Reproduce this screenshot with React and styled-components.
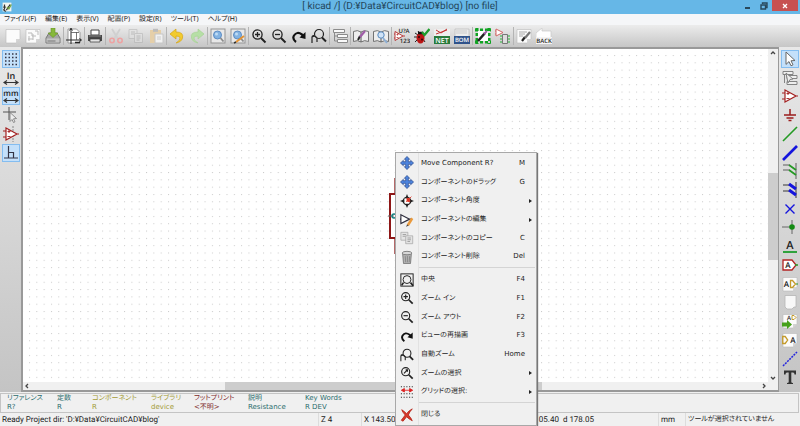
import React from "react";
import styled, { createGlobalStyle } from "styled-components";

/* ---------- icons, all drawn on a 16 x 16 grid ---------- */

const Paper = ({ fold = true }) => (
  <>
    <path d="M1 1.5h14v9.5l-4 4H1z" fill="#fbfbfb" stroke="#b9b9b9" strokeWidth=".6" />
    {fold && <path d="M15 11h-4v4z" fill="#d4d4d4" />}
  </>
);

const Lens = ({ children }) => (
  <g fill="none" stroke="#222" strokeWidth="1.3">
    <circle cx="6.5" cy="6.5" r="4.6" />
    <path d="M10 10l4.5 4.5" strokeWidth="2" />
    {children}
  </g>
);

const Blue = () => (
  <>
    <rect x="1" y="1" width="14" height="14" fill="#e8e8e8" stroke="#959595" />
    <circle cx="7.5" cy="7" r="4" fill="#83b3e2" stroke="#5e8dc4" />
    <circle cx="6.5" cy="6" r="1.5" fill="#bfdcf5" />
    <path d="M10.500 10l3 3.500" stroke="#8b8b8b" strokeWidth="1.800" />
  </>
);

const Move = () => (
  <path
    d="M8 .5l3 3.300H9.500v2.700h2.700V5l3.300 3-3.300 3V9.500H9.500v2.700H11l-3 3.300-3-3.300h1.500V9.500H3.800V11L.5 8l3.300-3v1.500h2.700V3.800H5z"
    fill="#4d83dc"
    stroke="#24468c"
    strokeWidth=".8"
  />
);

const Book = () => (
  <>
    <path d="M.5 3.500q4-2 7.500.5 3.500-2.500 7.500-.5v10q-4-2-7.500.5-3.500-2.500-7.500-.5z" fill="#eee" stroke="#666" strokeWidth=".9" />
    <path d="M8 4v10" stroke="#555" />
  </>
);

const Pages = () => (
  <g fill="#e4e4e4" stroke="#a4a4a4" strokeWidth=".8">
    <path d="M1 1.500h8v9H1z" />
    <path d="M6.500 5.500h8v9h-8z" />
    <path d="M3 4h4M3 6h3M8.500 8h4M8.500 10h4M8.500 12h3" stroke="#8a8a8a" />
  </g>
);

const Letters = ({ x, y, size, color, children }) => (
  <text x={x} y={y} fontSize={size} fill={color} fontWeight="600" fontFamily="Open Sans, sans-serif" textAnchor="middle">
    {children}
  </text>
);

const Amp = () => (
  <g fill="#fff" stroke="#a32020" strokeWidth="1.200">
    <path d="M3 2l11 6-11 6zM0 5h3M0 11h3M14 8h2" />
    <path d="M4.500 5.500h3M6 4v3M4.500 10.500h3" strokeWidth=".9" />
  </g>
);

const shapes = {
  app: (
    <>
      <rect x="1" y="1" width="14" height="14" fill="#f4f6f0" />
      <path d="M2 8h4M4 4v8M2 12l4 3M7 13l6-9" stroke="#333" strokeWidth="2" />
      <path d="M8 8l3 3 4-7" fill="none" stroke="#75a543" strokeWidth="2" />
    </>
  ),
  page: <Paper />,
  open: (
    <>
      <Paper />
      <path d="M3 5h4v3h4M10 3h3v4M3 11h5M8 6v6M4 8v5" fill="none" stroke="#bbb" />
    </>
  ),
  save: (
    <>
      <path d="M1 10l3-5h8l3 5v5H1z" fill="#a5a5a5" stroke="#777" />
      <path d="M1.500 10.500h13v4h-13z" fill="#c4c4c4" />
      <path d="M2.500 13h8" stroke="#777" />
      <path d="M6 0h4v5h3L8 9.500 3 5h3z" fill="#86b83b" stroke="#689626" strokeWidth=".6" />
    </>
  ),
  sheet: (
    <>
      <path d="M2 1h8.500l3.500 3.500V15H2z" fill="#fff" stroke="#999" />
      <path d="M0 12h15M5 0v16" stroke="#222" />
      <path d="M5 4.500h8M10.500 4v8" stroke="#555" strokeWidth=".8" />
      <path d="M3.500 2.500L5 .5l1.500 2M13.500 10.500l2 1.500-2 1.500" fill="none" stroke="#222" />
      <path d="M9 14.500h5" stroke="#222" strokeWidth="1.500" />
    </>
  ),
  print: (
    <>
      <path d="M4 2h8v5H4z" fill="#fff" stroke="#444" />
      <path d="M1 7h14v6H1z" fill="#474747" />
      <path d="M3 11h10v3H3z" fill="#e4e4e4" stroke="#333" strokeWidth=".7" />
      <path d="M2 8h12" stroke="#888" />
    </>
  ),
  cut: (
    <g fill="none">
      <path d="M4 1l6 10M12 1L6 11" stroke="#d0d0d0" strokeWidth="1.800" />
      <circle cx="4" cy="12.500" r="2.200" stroke="#eda3a3" strokeWidth="1.600" />
      <circle cx="12" cy="12.500" r="2.200" stroke="#eda3a3" strokeWidth="1.600" />
    </g>
  ),
  copyOff: <g opacity=".5"><Pages /></g>,
  paste: (
    <>
      <path d="M2 2h11v13H2z" fill="#e5cfa9" />
      <path d="M5 .8h5v3H5z" fill="#bdbdbd" />
      <path d="M7 6h8v9H7z" fill="#f1f1f1" stroke="#c6c6c6" />
      <path d="M9 9h4M9 11h4" stroke="#ccc" />
    </>
  ),
  undo: <path d="M1 6l6-5v3q8 0 6.500 6Q12.500 14 7 15q5-3 4-5.500-1-1.500-4-1.500v3z" fill="#f2cb2e" stroke="#d5a514" strokeWidth=".7" />,
  redo: <path d="M15 6L9 1v3Q1 4 2.500 10 3.500 14 9 15q-5-3-4-5.500 1-1.500 4-1.500v3z" fill="#b6dfa6" stroke="#a2d08f" strokeWidth=".6" />,
  find: <Blue />,
  replace: (
    <>
      <Blue />
      <path d="M6 14l8-6" stroke="#e49434" strokeWidth="2" />
      <path d="M4 15l2-1" stroke="#333" strokeWidth="1.500" />
    </>
  ),
  zoomIn: <Lens><path d="M4 6.500h5M6.500 4v5" /></Lens>,
  zoomOut: <Lens><path d="M4 6.500h5" /></Lens>,
  zoomSel: <Lens><path d="M4.500 8.500l4-4M6.500 4.500h2v2" /></Lens>,
  refresh: (
    <>
      <path d="M5 14Q1 11 3 7.500 6 3 11 6.500l1 2" fill="none" stroke="#111" strokeWidth="2.200" />
      <path d="M14.500 4v7L8.500 9.500z" fill="#111" />
    </>
  ),
  fit: (
    <g fill="none" stroke="#222" strokeWidth="1.200">
      <circle cx="8" cy="6" r="4.500" />
      <path d="M11 9.500l4 4" strokeWidth="2" />
      <path d="M1 15V9q0-1.500 2-1.500M1 9q3-2 5 1v4" />
    </g>
  ),
  center: (
    <g fill="none" stroke="#222" strokeWidth="1.100">
      <rect x="1" y="1" width="14" height="14" />
      <circle cx="8" cy="7.500" r="4.500" />
      <path d="M4 11l-2 3M12 11l3 3.500" strokeWidth="1.800" />
    </g>
  ),
  tree: (
    <g fill="#fafafa" stroke="#8b8b8b">
      <path d="M1.500 1.500h11v3h-11zM5.500 6.500h10v3h-10zM5.500 11.500h10v3h-10z" />
      <path d="M2.500 5v8h3M2.500 8h3" fill="none" />
    </g>
  ),
  treeCursor: (
    <g fill="#eee" stroke="#777" strokeWidth=".9">
      <path d="M1 1.500h10v3H1zM5 5.500h10v3H5zM5 11.500h10v3H5z" />
      <path d="M2.500 5v8M4 3l7 6-3 .5L6 13z" />
    </g>
  ),
  libEdit: (
    <>
      <Book />
      <path d="M5 12l2-4" stroke="#222" strokeWidth="2" />
      <path d="M7 9l5-6" stroke="#a05da8" strokeWidth="2.200" />
    </>
  ),
  libView: (
    <>
      <Book />
      <circle cx="8" cy="7" r="3.200" fill="#cfe3f8" stroke="#5989bd" />
      <path d="M10 10l4 5" stroke="#8daed3" strokeWidth="2" />
    </>
  ),
  annotate: (
    <>
      <path d="M1 3.500l8 4.500-8 4.500zM0 6h1M0 10h1M9 8h2" fill="#fff" stroke="#b83a3a" />
      <path d="M2.500 6.500h2M3.500 5.500v2M2.500 9.500h2" stroke="#b83a3a" strokeWidth=".8" />
      <Letters x="10" y="5" size="6" color="#222">U?A</Letters>
      <Letters x="11" y="15" size="6" color="#222">123</Letters>
    </>
  ),
  bug: (
    <>
      <path d="M1 5l3 2M0 9h4M1 14l3-3M11 14l-2-3M4 3l2 3" stroke="#222" />
      <ellipse cx="6.500" cy="10" rx="4" ry="5.500" fill="#bb1515" />
      <circle cx="5" cy="9" r="1" fill="#260808" />
      <circle cx="8" cy="11.500" r="1" fill="#260808" />
      <path d="M4 5h5" stroke="#111" strokeWidth="2.500" />
      <path d="M8 4l2.500 3L15.500 1" fill="none" stroke="#1e9c2d" strokeWidth="2.300" />
    </>
  ),
  net: (
    <>
      <path d="M0 1h16v14H0z" fill="#eee" />
      <path d="M2 2l5 3 6-4M2 6l11-4" fill="none" stroke="#c43434" />
      <path d="M0 8h16v8H0z" fill="#287b3c" />
      <Letters x="8" y="14.500" size="7" color="#fff">NET</Letters>
    </>
  ),
  bom: (
    <>
      <path d="M1 1h14v8H1z" fill="#ececec" stroke="#aaa" strokeWidth=".5" />
      <path d="M2 3h11M2 5h11" stroke="#bbb" strokeWidth=".6" />
      <path d="M0 8h16v8H0z" fill="#30538b" />
      <Letters x="8" y="14.300" size="6" color="#fff">BOM</Letters>
    </>
  ),
  footprint: (
    <>
      <path d="M2 0v16M14 0v16M0 2h16M0 14h16" stroke="#11a323" strokeWidth="3" strokeDasharray="3 2" />
      <path d="M3 3h10v10H3z" fill="#fff" />
      <path d="M3 13l7-8" stroke="#222" strokeWidth="2.500" />
      <path d="M9 6l3-3" stroke="#a05da8" strokeWidth="2" />
    </>
  ),
  backImport: (
    <>
      <path d="M1 1l7 3.500L1 8zM0 3h1M0 6h1" fill="#fff" stroke="#d16666" />
      <path d="M7.500 6.500h5v9h-5z" fill="#ddd" stroke="#777" />
      <path d="M6 7v8M14 7v8" stroke="#5fbf6a" strokeWidth="1.500" strokeDasharray="2 1" />
    </>
  ),
  write: (
    <>
      <Paper />
      <path d="M3 4h8M3 6h6M3 8h4" stroke="#aaa" />
      <path d="M6 13l3-4" stroke="#222" strokeWidth="2.200" />
      <path d="M9 10l5-6" stroke="#777" strokeWidth="2.200" />
    </>
  ),
  back: (
    <>
      <path d="M0 5l6-5v3h9v7H0z" fill="#fff" stroke="#c9c9c9" strokeWidth=".7" />
      <path d="M0 9h16v7H0z" fill="#f4f4f4" />
      <Letters x="8" y="15" size="6" color="#222">BACK</Letters>
    </>
  ),
  grid: (
    <path d="M2 3h13M2 6.500h13M2 10h13M2 13.500h13" stroke="#334" strokeWidth="1.500" strokeDasharray="1.500 2" />
  ),
  inch: (
    <>
      <Letters x="8" y="9" size="9" color="#222">In</Letters>
      <path d="M2 12.500h12M4 10.500l-3 2 3 2M12 10.500l3 2-3 2" fill="none" stroke="#333" strokeWidth="1.200" />
    </>
  ),
  mm: (
    <>
      <Letters x="8" y="8" size="8" color="#222">mm</Letters>
      <path d="M2 12.500h12M4 10.500l-3 2 3 2M12 10.500l3 2-3 2" fill="none" stroke="#333" strokeWidth="1.200" />
    </>
  ),
  crosshair: (
    <>
      <path d="M6 0v13M0 5h13" stroke="#555" />
      <path d="M7 5.500l6.500 6-3 .3 1.500 3-1.500.7-1.500-3-2 2z" fill="#eee" stroke="#777" strokeWidth=".8" />
    </>
  ),
  hidden: (
    <>
      <path d="M10 0v16" stroke="#888" strokeDasharray="2 1" />
      <Amp />
    </>
  ),
  ortho: <path d="M5.500 1v12M1 13h14M5.500 7.500h5V13" fill="none" stroke="#334" strokeWidth="1.200" />,
  cursor: <path d="M4 1l9 8.500-4 .3 2 4-2 1-2-4.200-3 2.800z" fill="#fff" stroke="#666" />,
  amp: <Amp />,
  power: <path d="M8 2v6M2 8h12M4.500 11h7M6.500 13.500h3" stroke="#9b1c1c" strokeWidth="1.500" />,
  wire: <path d="M1 15L15 1" stroke="#249a24" strokeWidth="1.600" />,
  bus: <path d="M1 15L15 1" stroke="#1414dd" strokeWidth="2.600" />,
  wireEntry: (
    <g fill="none">
      <path d="M14 0v16M1 2h7M1 7h7" stroke="#888" strokeWidth="1.500" />
      <path d="M7 2l7 5M7 7l7 5" stroke="#249a24" strokeWidth="1.800" />
    </g>
  ),
  busEntry: (
    <g fill="none">
      <path d="M14 0v16M1 3h7M1 9h7" stroke="#888" strokeWidth="2" />
      <path d="M7 2l7 5M7 8l7 5" stroke="#1414dd" strokeWidth="3" />
    </g>
  ),
  cross: <path d="M3.500 3.500l9 9M12.500 3.500l-9 9" stroke="#1414dd" strokeWidth="1.400" />,
  junction: (
    <>
      <path d="M0 8h9M10 1v14" stroke="#666" />
      <circle cx="10" cy="8" r="2.800" fill="#128a12" />
    </>
  ),
  label: (
    <>
      <Letters x="8" y="11" size="11" color="#222">A</Letters>
      <path d="M1 14h14" stroke="#1c9c2c" strokeWidth="1.800" />
    </>
  ),
  globalLabel: (
    <>
      <path d="M1 3h9l4 5-4 5H1z" fill="#fff" stroke="#b32424" strokeWidth="1.300" />
      <path d="M13 8h3" stroke="#249a24" strokeWidth="1.500" />
      <Letters x="6" y="11" size="8" color="#222">A</Letters>
    </>
  ),
  hierLabel: (
    <>
      <Paper />
      <Letters x="4.500" y="11" size="8" color="#222">A</Letters>
      <path d="M8.500 4.500h2l3 3.500-3 3.500h-2z" fill="none" stroke="#c49b2b" strokeWidth="1.300" />
      <path d="M14 8h2" stroke="#249a24" />
    </>
  ),
  sheetNew: <path d="M3 1.500h11V13h-2l-2 2H5l-2-2z" fill="#f8f8f8" stroke="#b5b5b5" strokeWidth=".8" />,
  importPin: (
    <>
      <Paper />
      <Letters x="7" y="7" size="6" color="#222">A</Letters>
      <path d="M10 2.500h2l2 2-2 2h-2z" fill="none" stroke="#c49b2b" />
      <path d="M0 9.500h5V7l5 4.500L5 16v-2.500H0z" fill="#45a11a" />
    </>
  ),
  sheetPin: (
    <>
      <Paper />
      <path d="M.7 4.500h2.500l2.500 3.500-2.500 3.500H.7z" fill="none" stroke="#c49b2b" strokeWidth="1.300" />
      <Letters x="11" y="11" size="8" color="#222">A</Letters>
    </>
  ),
  dashed: <path d="M1 15L15 1" stroke="#2626dd" strokeWidth="1.500" strokeDasharray="2 1" />,
  text: <path d="M2 1.500h12v4h-1.500q0-2-1.500-2H9.300V13q0 1 1.700 1v1H5v-1q1.700 0 1.700-1V3.500H5q-1.500 0-1.500 2H2z" fill="#333" />,
  move: <Move />,
  rotate: (
    <>
      <circle cx="8" cy="8" r="4.300" fill="#fff" stroke="#222" strokeWidth="1.400" />
      <path d="M8 0l2 5H6zM8 16l2-5H6zM0 8l5-2v4zM16 8l-5-2v4z" fill="#222" />
      <path d="M7 9l6-6M8 5h3v4L8 8z" fill="#dc3222" stroke="#dc3222" />
    </>
  ),
  edit: (
    <>
      <path d="M1 2l10 5-10 5zM0 7h1M11 7h2" fill="#fff" stroke="#30303f" strokeWidth="1.300" />
      <path d="M9 14l5-8" stroke="#ea9a3d" strokeWidth="2.800" />
      <path d="M7 16l1-3 2 1z" fill="#444" />
    </>
  ),
  copy: <Pages />,
  trash: (
    <>
      <path d="M3 4h10l-1 11.500H4z" fill="#b2b2b2" stroke="#777" />
      <ellipse cx="8" cy="3.500" rx="5.500" ry="2" fill="#d8d8d8" stroke="#777" />
      <path d="M6 7l.5 7M8.500 7v7M11 7l-.5 7" stroke="#858585" />
    </>
  ),
  gridSel: (
    <>
      <path d="M1 2h14M1 10h14M1 14h14" stroke="#333" strokeWidth="1.300" strokeDasharray="1.300 1.800" />
      <path d="M3 6h10M5 4L1.500 6 5 8zM11 4l3.500 2L11 8z" fill="#dd2424" stroke="#dd2424" />
    </>
  ),
  close: (
    <path d="M2 2q3 2 5.500 4.500Q10 3 14 1q-3 3-4.500 7 3 3 4.500 6.500-4-2-6.500-4.500L3.500 15 1.500 14 6 8Q3 5 2 2z" fill="#d7392b" stroke="#b72318" strokeWidth="1" />
  ),
};

const Icon = ({ name, size = 16 }) => (
  <svg width={size} height={size} viewBox="0 0 16 16" aria-hidden="true">
    {shapes[name]}
  </svg>
);

/* ---------- data ---------- */

const menus = ["ファイル(F)", "編集(E)", "表示(V)", "配置(P)", "設定(R)", "ツール(T)", "ヘルプ(H)"];

const toolGroups = [
  ["page", "open", "save"],
  ["sheet"],
  ["print"],
  ["cut", "copyOff", "paste"],
  ["undo", "redo"],
  ["find", "replace"],
  ["zoomIn", "zoomOut", "refresh", "fit"],
  ["tree"],
  ["libEdit", "libView"],
  ["annotate", "bug", "net", "bom"],
  ["footprint", "backImport"],
  ["write", "back"],
];

const leftTools = ["grid", "inch", "mm", "crosshair", "hidden", "ortho"];
const leftActive = ["grid", "mm", "ortho"];

const rightTools = [
  "cursor", "treeCursor", "amp", "power", "wire", "bus", "wireEntry", "busEntry", "cross",
  "junction", "label", "globalLabel", "hierLabel", "sheetNew", "importPin", "sheetPin", "dashed", "text",
];

const contextGroups = [
  [
    { icon: "move", label: "Move Component R?", hint: "M" },
    { icon: "move", label: "コンポーネントのドラッグ", hint: "G" },
    { icon: "rotate", label: "コンポーネント角度", sub: true },
    { icon: "edit", label: "コンポーネントの編集", sub: true },
    { icon: "copy", label: "コンポーネントのコピー", hint: "C" },
    { icon: "trash", label: "コンポーネント削除", hint: "Del" },
  ],
  [
    { icon: "center", label: "中央", hint: "F4" },
    { icon: "zoomIn", label: "ズーム イン", hint: "F1" },
    { icon: "zoomOut", label: "ズーム アウト", hint: "F2" },
    { icon: "refresh", label: "ビューの再描画", hint: "F3" },
    { icon: "fit", label: "自動ズーム", hint: "Home" },
    { icon: "zoomSel", label: "ズームの選択", sub: true },
    { icon: "gridSel", label: "グリッドの選択:", sub: true },
  ],
  [{ icon: "close", label: "閉じる" }],
];

const fields = [
  ["リファレンス", "R?", "#2b6d6d"],
  ["定数", "R", "#2b6d6d"],
  ["コンポーネント", "R", "#a39b35"],
  ["ライブラリ", "device", "#a39b35"],
  ["フットプリント", "<不明>", "#7d2a2a"],
  ["説明", "Resistance", "#2b6d6d"],
  ["Key Words", "R DEV", "#2b6d6d"],
];

/* ---------- page ---------- */

const Schematic = () => (
  <Drawing aria-label="schematic">
    <defs>
      <pattern id="dots" x="6" y="6" width="7.315" height="7.315" patternUnits="userSpaceOnUse">
        <rect width="1" height="1" fill="#cacaca" />
      </pattern>
    </defs>
    <rect width="100%" height="100%" fill="url(#dots)" />
    <path d="M371.500 129v15M371.500 190v15" stroke="#b56a6a" />
    <path d="M390 145h-23v44h23" fill="none" stroke="#8e1616" strokeWidth="2" />
    <path d="M365 167h6" stroke="#666" />
    <circle cx="371" cy="167" r="2" fill="none" stroke="#168080" strokeWidth="1.500" />
  </Drawing>
);

const Arrow = ({ d }) => (
  <svg width="8" height="8" viewBox="0 0 8 8" aria-hidden="true">
    <path d={d} fill="none" stroke="#444" strokeWidth="1.300" />
  </svg>
);

const App = () => {
  return (
    <Window>
      <GlobalStyle />
      <TitleBar>
        <Icon name="app" size={10} />
        <h1>[ kicad /] (D:¥Data¥CircuitCAD¥blog) [no file]</h1>
        <Controls>
          <WinButton aria-label="minimize">
            <svg width="6" height="8" viewBox="0 0 6 8"><path d="M0 6h5" stroke="#29485b" strokeWidth="2" /></svg>
          </WinButton>
          <WinButton aria-label="restore">
            <svg width="8" height="8" viewBox="0 0 8 8">
              <path d="M2.500 2V1H7v4.500H6M1 3h4.500v4H1z" fill="none" stroke="#29485b" strokeWidth="1.400" />
            </svg>
          </WinButton>
          <WinButton $close aria-label="close">
            <svg width="6" height="6" viewBox="0 0 6 6"><path d="M1 1l4 4M5 1L1 5" stroke="#fff" strokeWidth="1.300" /></svg>
          </WinButton>
        </Controls>
      </TitleBar>

      <MenuBar>
        {menus.map((m) => (
          <button key={m}>{m}</button>
        ))}
      </MenuBar>

      <Toolbar>
        {toolGroups.map((group) => (
          <ToolGroup key={group[0]}>
            {group.map((name) => (
              <ToolButton key={name} aria-label={name}>
                <Icon name={name} />
              </ToolButton>
            ))}
          </ToolGroup>
        ))}
      </Toolbar>

      <Workspace>
        <SideBar>
          {leftTools.map((name) => (
            <SideButton key={name} $active={leftActive.includes(name)} aria-label={name}>
              <Icon name={name} />
            </SideButton>
          ))}
        </SideBar>
        <Canvas>
          <Schematic />
          <ScrollBar>
            <Arrow d="M2 5l2-2 2 2" />
            <Track>
              <Gap $size={116} />
              <Thumb $size={86} />
              <Gap $size={114} />
            </Track>
            <Arrow d="M2 3l2 2 2-2" />
          </ScrollBar>
          <ScrollBar $horizontal>
            <Arrow d="M5 2L3 4l2 2" />
            <Track $horizontal>
              <Gap $size={194} />
              <Thumb $size={316} />
              <Gap $size={218} />
            </Track>
            <Arrow d="M3 2l2 2-2 2" />
          </ScrollBar>
        </Canvas>
        <SideBar>
          {rightTools.map((name) => (
            <SideButton key={name} $active={name === "cursor"} aria-label={name}>
              <Icon name={name} />
            </SideButton>
          ))}
        </SideBar>
      </Workspace>

      <MessagePanel>
        {fields.map(([name, value, color]) => (
          <Field key={name} $color={color}>
            <dt>{name}</dt>
            <dd>{value}</dd>
          </Field>
        ))}
      </MessagePanel>

      <StatusBar>
        <span>Ready Project dir: 'D:¥Data¥CircuitCAD¥blog'</span>
        <span>Z 4</span>
        <span>X 143.50 Y 105.40</span>
        <span>dx 143.50 dy 105.40&nbsp; d 178.05</span>
        <span>mm</span>
        <span className="tool">ツールが選択されていません</span>
      </StatusBar>

      <ContextMenu>
        {contextGroups.map((group, i) => (
          <React.Fragment key={i}>
            {i > 0 && <Divider />}
            {group.map((item) => (
              <MenuItem key={item.label}>
                <Icon name={item.icon} size={14} />
                <span className="label">{item.label}</span>
                <span className="hint">{item.hint}</span>
                {item.sub && <i className="arrow" />}
              </MenuItem>
            ))}
          </React.Fragment>
        ))}
      </ContextMenu>
    </Window>
  );
};

export default App;

const GlobalStyle = createGlobalStyle`
  * {
    box-sizing: border-box;
  }
  body {
    margin: 0;
    overflow: hidden;
    color: #222;
    font-family: "DejaVu Sans", "Noto Sans CJK JP", sans-serif;
    font-size: 7px;
    line-height: 9px;
    font-feature-settings: "palt";
    text-rendering: geometricPrecision;
  }
  button {
    margin: 0;
    padding: 0;
    border: 0;
    background: none;
    color: inherit;
    font: inherit;
    font-feature-settings: inherit;
    text-rendering: inherit;
  }
  svg {
    display: block;
    flex: none;
  }
`;

const Window = styled.div`
  position: relative;
  display: flex;
  flex-direction: column;
  height: 100vh;
  background: #f0f0f0;
`;

const TitleBar = styled.header`
  display: grid;
  grid-template-columns: 1fr auto 1fr;
  align-items: center;
  height: 14px;
  padding: 0 2px;
  background: #66b7e7;

  h1 {
    margin: 0;
    color: #24465a;
    font-family: Roboto, "Noto Sans", sans-serif;
    font-size: 10px;
    line-height: 14px;
    font-weight: 400;
  }
`;

const Controls = styled.div`
  display: flex;
  justify-content: flex-end;
  align-self: start;
`;

const WinButton = styled.button`
  display: grid;
  place-items: center;
  width: ${(p) => (p.$close ? 26 : 16)}px;
  height: 11px;
  background: ${(p) => (p.$close ? "#c75050" : "none")};
`;

const MenuBar = styled.nav`
  display: flex;
  gap: 9px;
  height: 11px;
  padding: 0 4px;
  background: #f5f6f8;
  font-family: "Noto Sans", "Noto Sans CJK JP", sans-serif;
  line-height: 11px;
`;

const Toolbar = styled.div`
  display: flex;
  align-items: center;
  height: 22px;
  padding: 0 3px;
  background: linear-gradient(#ececec, #c6c6c6);
`;

const ToolGroup = styled.div`
  display: flex;

  & + & {
    border-left: 1px solid #b4b4b4;
  }
`;

const ToolButton = styled.button`
  display: grid;
  place-items: center;
  width: 20px;
  height: 18px;
`;

const Workspace = styled.main`
  display: flex;
  flex: 1;
  min-height: 0;
`;

const SideBar = styled.div`
  display: grid;
  grid-template-rows: repeat(18, 1fr);
  justify-items: center;
  width: 21px;
  padding: 3px 1px 5px;
  background: linear-gradient(#e8e8e8, #c4c4c4);
`;

const SideButton = styled.button`
  display: grid;
  place-items: center;
  width: 18px;
  height: 18px;
  border: 1px solid ${(p) => (p.$active ? "#84bdf0" : "transparent")};
  background: ${(p) => (p.$active ? "#c4e0fa" : "none")};
`;

const Canvas = styled.section`
  display: grid;
  grid-template-columns: 1fr 10px;
  grid-template-rows: 1fr 8px;
  flex: 1;
  min-width: 0;
  border: 1px solid #999;
  border-width: 2px 1px 2px 2px;
  background: #fff;
`;

const Drawing = styled.svg`
  width: 100%;
  height: 100%;
  min-height: 0;
`;

const ScrollBar = styled.div`
  display: flex;
  flex-direction: ${(p) => (p.$horizontal ? "row" : "column")};
  align-items: center;
  grid-column: ${(p) => (p.$horizontal ? "1 / 3" : "2")};
  padding-right: ${(p) => (p.$horizontal ? 10 : 0)}px;
  background: #f0f0f0;
`;

const Track = styled.div`
  display: flex;
  flex-direction: ${(p) => (p.$horizontal ? "row" : "column")};
  align-self: stretch;
  flex: 1;
`;

const Gap = styled.div`
  flex: ${(p) => p.$size};
`;

const Thumb = styled(Gap)`
  background: #cdcdcd;
`;

const MessagePanel = styled.dl`
  display: grid;
  grid-template-columns: 50px 35px 59px 43px 54px 57px 1fr;
  height: 20px;
  margin: 1px 1px 0 0;
  padding: 0 6px;
  border: 1px solid #c4c4c4;
`;

const Field = styled.div`
  color: ${(p) => p.$color};
  white-space: nowrap;

  dt,
  dd {
    margin: 0;
  }
`;

const StatusBar = styled.footer`
  display: grid;
  grid-template-columns: 1fr 43px 123px 174px 27px 115px;
  height: 13px;
  font-family: Roboto, "Noto Sans CJK JP", sans-serif;
  font-size: 8px;
  line-height: 13px;
  white-space: nowrap;

  span {
    padding-left: 2px;
  }
  span + span {
    border-left: 1px solid #dcdcdc;
  }
  .tool {
    font-size: 7px;
  }
`;

const ContextMenu = styled.div`
  position: absolute;
  top: 152px;
  bottom: 0;
  left: 395px;
  display: flex;
  flex-direction: column;
  width: 142px;
  padding: 1px;
  border: 1px solid #a8a8a8;
  background: linear-gradient(90deg, #f0f0f0 22px, #e2e2e2 22px, #e2e2e2 23px, #f0f0f0 23px);
  box-shadow: 1px 1px 1px #777;
`;

const MenuItem = styled.button`
  display: grid;
  grid-template-columns: 20px 1fr auto 10px;
  align-items: center;
  flex: 1;
  min-height: 0;
  padding-left: 3px;
  text-align: left;
  white-space: nowrap;

  .label {
    padding-left: 1px;
  }
  .arrow {
    justify-self: center;
    border: 2px solid transparent;
    border-left: 3px solid #222;
    border-right: 0;
  }
`;

const Divider = styled.hr`
  width: 116px;
  height: 1px;
  margin: 1px 0 2px auto;
  border: 0;
  background: #d4d4d4;
`;
